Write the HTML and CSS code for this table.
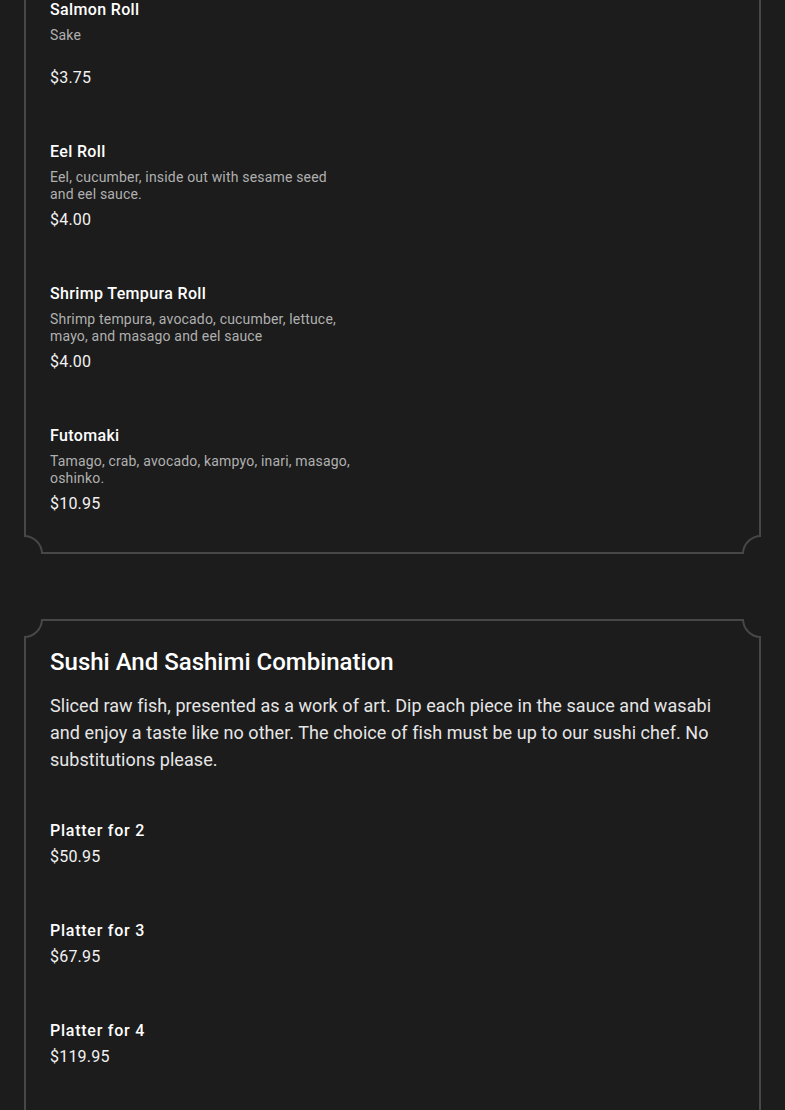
FILE: index.html
```html
<!DOCTYPE html>
<html lang="en">
<head>
<meta charset="utf-8">
<title>Menu</title>
<link rel="stylesheet" href="styles.css">
</head>
<body>
<main class="page">
  <section class="card card-first">
    <span class="corner tl"></span><span class="corner tr"></span><span class="corner bl"></span><span class="corner br"></span>
    <div class="items">
      <article class="item">
        <h3 class="item-name">Salmon Roll</h3>
        <p class="item-desc">Sake</p>
        <p class="item-price">$3.75</p>
      </article>
      <article class="item">
        <h3 class="item-name">Eel Roll</h3>
        <p class="item-desc">Eel, cucumber, inside out with sesame seed and eel sauce.</p>
        <p class="item-price">$4.00</p>
      </article>
      <article class="item">
        <h3 class="item-name">Shrimp Tempura Roll</h3>
        <p class="item-desc">Shrimp tempura, avocado, cucumber, lettuce, mayo, and masago and eel sauce</p>
        <p class="item-price">$4.00</p>
      </article>
      <article class="item">
        <h3 class="item-name">Futomaki</h3>
        <p class="item-desc">Tamago, crab, avocado, kampyo, inari, masago, oshinko.</p>
        <p class="item-price">$10.95</p>
      </article>
    </div>
  </section>

  <section class="card card-second">
    <span class="corner tl"></span><span class="corner tr"></span><span class="corner bl"></span><span class="corner br"></span>
    <h2 class="card-title">Sushi And Sashimi Combination</h2>
    <p class="card-desc">Sliced raw fish, presented as a work of art. Dip each piece in the sauce and wasabi and enjoy a taste like no other. The choice of fish must be up to our sushi chef. No substitutions please.</p>
    <div class="items items-plain">
      <article class="item">
        <h3 class="item-name">Platter for 2</h3>
        <p class="item-price">$50.95</p>
      </article>
      <article class="item">
        <h3 class="item-name">Platter for 3</h3>
        <p class="item-price">$67.95</p>
      </article>
      <article class="item">
        <h3 class="item-name">Platter for 4</h3>
        <p class="item-price">$119.95</p>
      </article>
    </div>
  </section>
</main>
</body>
</html>
```

FILE: styles.css
```css
* { box-sizing: border-box; }

html, body {
  margin: 0;
  padding: 0;
  background: #1c1c1c;
}

body {
  font-family: Roboto, "Liberation Sans", Arial, sans-serif;
  color: #ffffff;
  overflow: hidden;
}

.page {
  display: flex;
  flex-direction: column;
  gap: 65px;
  padding: 0 24px;
  margin-top: -28px;
}

.card {
  position: relative;
  border: 2px solid #474747;
  padding: 26px 24px 38px;
  clip-path: inset(0);
}

.card-second {
  padding-bottom: 90px;
}

.corner {
  position: absolute;
  width: 38px;
  height: 38px;
  border: 2px solid #474747;
  border-radius: 50%;
  background: #1c1c1c;
}
.corner.tl { left: -21px; top: -21px; }
.corner.tr { right: -21px; top: -21px; }
.corner.bl { left: -21px; bottom: -21px; }
.corner.br { right: -21px; bottom: -21px; }

.items {
  display: flex;
  flex-direction: column;
  gap: 54px;
}

.item {
  display: flex;
  flex-direction: column;
  margin: 0;
}

.item-name {
  margin: 0;
  font-size: 16px;
  line-height: 20px;
  font-weight: 500;
  color: #ffffff;
  letter-spacing: 0.35px;
}

.items-plain .item-name {
  letter-spacing: 0.75px;
}

.item-desc {
  margin: 7px 0 0;
  width: 304px;
  min-height: 34px;
  font-size: 14px;
  line-height: 17px;
  color: #b0b0b0;
  letter-spacing: 0.18px;
}

.item-price {
  margin: 7px 0 0;
  font-size: 16px;
  line-height: 20px;
  color: #f2f2f2;
  letter-spacing: 0.2px;
}

.items-plain .item-price { margin-top: 6px; }

.card-title {
  margin: 0;
  font-size: 24px;
  line-height: 30px;
  font-weight: 500;
  color: #ffffff;
}

.card-desc {
  margin: 15px 0 48px;
  font-size: 18px;
  line-height: 27px;
  color: #e6e6e6;
  letter-spacing: 0.06px;
}
```
